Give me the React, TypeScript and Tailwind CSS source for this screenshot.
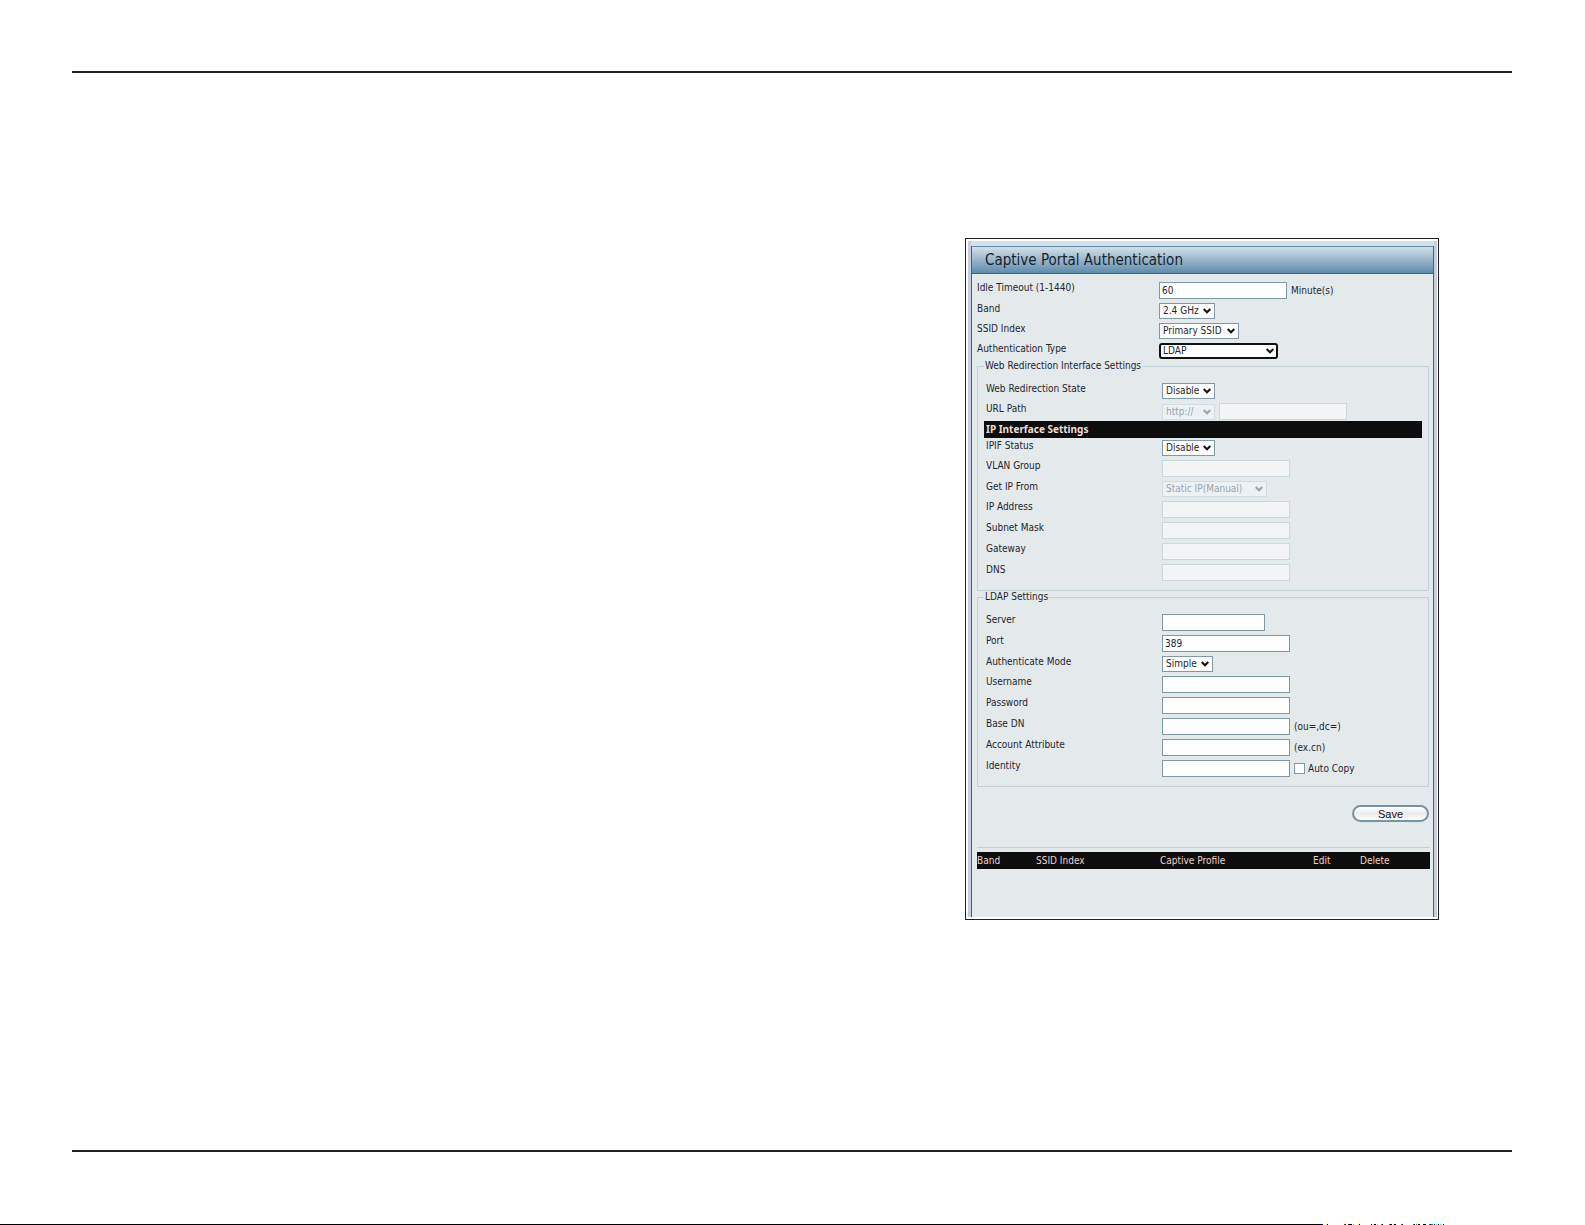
import { createContext, useContext, useId } from 'react'
import type { ReactNode } from 'react'
import clsx from 'clsx'

const FieldId = createContext('')

interface RowProps {
  label: string
  kind?: 'input' | 'select'
  nested?: boolean
  children: ReactNode
}

function Row({ label, kind = 'input', nested, children }: RowProps) {
  const id = useId()
  return (
    <div className={clsx('flex items-start', kind === 'input' ? 'h-[21px]' : 'h-5', nested && 'pl-0.5')}>
      <label htmlFor={id} className={clsx('shrink-0', nested ? 'w-[176px]' : 'w-[182px]')}>
        {label}
      </label>
      <div className="flex items-center gap-1 pt-0.5">
        <FieldId.Provider value={id}>{children}</FieldId.Provider>
      </div>
    </div>
  )
}

interface TextBoxProps {
  value?: string
  width?: string
  disabled?: boolean
  title?: string
}

function TextBox({ value = '', width = 'w-32', disabled, title }: TextBoxProps) {
  const id = useContext(FieldId)
  return (
    <input
      id={title ? undefined : id}
      aria-label={title}
      type="text"
      defaultValue={value}
      disabled={disabled}
      className={clsx(
        'h-[17px] border px-0.5',
        width,
        disabled ? 'border-[#c9d6dc] bg-[#f2f4f6]' : 'border-[#8099a6] bg-white',
      )}
    />
  )
}

interface DropDownProps {
  value: string
  width: string
  disabled?: boolean
  focused?: boolean
}

function DropDown({ value, width, disabled, focused }: DropDownProps) {
  const id = useContext(FieldId)
  return (
    <div className={clsx('relative h-4', width)}>
      <select
        id={id}
        disabled={disabled}
        className={clsx(
          'block h-4 w-full appearance-none',
          focused ? 'rounded-[3px] border-2 border-[#111] bg-white px-0.5 leading-3' : 'border px-[3px] leading-[14px]',
          !focused && (disabled ? 'border-[#cfdce2] bg-[#eef1f3] text-[#93a5b0]' : 'border-[#8099a6] bg-white'),
        )}
      >
        <option>{value}</option>
      </select>
      <svg
        viewBox="0 0 8 6"
        className={clsx('pointer-events-none absolute top-[5px] right-1 h-1.5 w-2', disabled ? 'text-[#93a5b0]' : 'text-[#111]')}
        fill="none"
        stroke="currentColor"
        strokeWidth="2"
      >
        <path d="M0.7 1 L4 4.3 L7.3 1" />
      </svg>
    </div>
  )
}

function Group({ title, children }: { title: string; children: ReactNode }) {
  return (
    <fieldset className="mr-1 border border-[#c2d1d8] px-1.5 pb-[7px]">
      <legend className="px-px leading-[10px]">{title}</legend>
      <div className="pt-2.5">{children}</div>
    </fieldset>
  )
}

const COLUMNS = [
  { name: 'Band', width: 'w-[59px]' },
  { name: 'SSID Index', width: 'w-[124px]' },
  { name: 'Captive Profile', width: 'w-[153px]' },
  { name: 'Edit', width: 'w-[47px]' },
  { name: 'Delete', width: '' },
]

// Coloured dots that end the line at the foot of the page
const DOTS: [number, string][] = [
  [0, '#00f'], [4, '#fe0'], [5, '#000'], [22, '#a20'], [23, '#00f'], [26, '#224'], [27, '#000'], [28, '#000'],
  [29, '#000'], [31, '#0cc'], [36, '#fe0'], [37, '#000'], [49, '#000'], [51, '#fe0'], [52, '#000'], [53, '#000'],
  [55, '#0ff'], [59, '#f20'], [60, '#00a'], [67, '#f20'], [68, '#000'], [69, '#000'], [71, '#fe0'], [72, '#000'],
  [73, '#000'], [79, '#f20'], [80, '#00f'], [91, '#f20'], [92, '#00a'], [94, '#0a0'], [96, '#000'], [97, '#000'],
  [101, '#000'], [102, '#000'], [103, '#00a'], [107, '#f20'], [108, '#00a'], [109, '#f20'], [110, '#0a0'],
  [112, '#00f'], [114, '#0ff'], [116, '#000'], [118, '#0ff'], [121, '#000'],
]

function CaptivePortal() {
  return (
    <section className="ml-auto mr-[73px] w-[474px] border border-[#231f20] bg-white py-0.5 pr-px pl-0.5">
      <div className="border-x-3 border-[#c6cddd] bg-[#d3e0e7] pt-[5px]">
        <div className="border-x border-[#33688c] bg-[#e4e9ec]">
          <h1 className="h-7 border-y border-t-[#5e8aa8] border-b-[#2f6a93] bg-linear-to-b from-[#d3e0e8] to-[#5f8cac] pl-[13px] text-[15px] leading-[26px] text-[#17232d]">
            Captive Portal Authentication
          </h1>
          <form className="pt-1.5 pb-12 pl-[5px]">
            <Row label="Idle Timeout (1-1440)">
              <TextBox value="60" />
              <span>Minute(s)</span>
            </Row>
            <Row label="Band" kind="select">
              <DropDown value="2.4 GHz" width="w-14" />
            </Row>
            <Row label="SSID Index" kind="select">
              <DropDown value="Primary SSID" width="w-20" />
            </Row>
            <Row label="Authentication Type" kind="select">
              <DropDown value="LDAP" width="w-[119px]" focused />
            </Row>

            <Group title="Web Redirection Interface Settings">
              <Row label="Web Redirection State" kind="select" nested>
                <DropDown value="Disable" width="w-[53px]" />
              </Row>
              <Row label="URL Path" kind="select" nested>
                <DropDown value="http://" width="w-[53px]" disabled />
                <TextBox title="URL" disabled />
              </Row>
              <h2 className="h-[17px] bg-[#0c0d0c] pl-0.5 font-['Noto_Sans',sans-serif] font-bold leading-4 text-[#f0dcd8]">
                IP Interface Settings
              </h2>
              <Row label="IPIF Status" kind="select" nested>
                <DropDown value="Disable" width="w-[53px]" />
              </Row>
              <Row label="VLAN Group" nested>
                <TextBox disabled />
              </Row>
              <Row label="Get IP From" kind="select" nested>
                <DropDown value="Static IP(Manual)" width="w-[105px]" disabled />
              </Row>
              {['IP Address', 'Subnet Mask', 'Gateway', 'DNS'].map((label) => (
                <Row key={label} label={label} nested>
                  <TextBox disabled />
                </Row>
              ))}
            </Group>

            <div className="pt-px">
              <Group title="LDAP Settings">
                <Row label="Server" nested>
                  <TextBox width="w-[103px]" />
                </Row>
                <Row label="Port" nested>
                  <TextBox value="389" />
                </Row>
                <Row label="Authenticate Mode" kind="select" nested>
                  <DropDown value="Simple" width="w-[51px]" />
                </Row>
                <Row label="Username" nested>
                  <TextBox />
                </Row>
                <Row label="Password" nested>
                  <TextBox />
                </Row>
                <Row label="Base DN" nested>
                  <TextBox />
                  <span>(ou=,dc=)</span>
                </Row>
                <Row label="Account Attribute" nested>
                  <TextBox />
                  <span>(ex.cn)</span>
                </Row>
                <Row label="Identity" nested>
                  <TextBox />
                  <label className="flex items-center gap-[3px]">
                    <input type="checkbox" className="size-[11px] appearance-none border border-[#8099a6] bg-white" />
                    Auto Copy
                  </label>
                </Row>
              </Group>
            </div>

            <div className="flex justify-end pt-[18px] pr-1">
              <button
                type="button"
                className="h-[17px] w-[77px] rounded-full border-2 border-[#7893a3] bg-linear-to-b from-white via-[#eceaec] to-white font-['Liberation_Sans',sans-serif] text-[11px] leading-3 text-[#111]"
              >
                Save
              </button>
            </div>

            <div className="mt-[25px] mr-[3px] border-t border-[#c2d1d8] pt-1">
              <table className="w-full bg-[#0c0d0c] text-left text-[#f0d2cb]">
                <thead>
                  <tr className="h-[17px]">
                    {COLUMNS.map((c) => (
                      <th key={c.name} className={clsx('p-0 font-normal', c.width)}>
                        {c.name}
                      </th>
                    ))}
                  </tr>
                </thead>
              </table>
            </div>
          </form>
        </div>
      </div>
    </section>
  )
}

export default function App() {
  return (
    <main className="bg-white pt-[71px] font-['DejaVu_Sans_Condensed','DejaVu_Sans',sans-serif] text-[10px] leading-[15px] text-[#1d262d]">
      <div className="pr-[73px] pl-[72px]">
        <hr className="border-t-2 border-[#231f20]" />
        <div className="flex pt-[165px] pb-[230px]">
          <CaptivePortal />
        </div>
        <hr className="border-t-2 border-[#231f20]" />
      </div>
      <div className="flex pt-[72px]">
        <div className="h-px flex-1 bg-black" />
        <svg viewBox="0 0 263 1" className="h-px w-[263px]" shapeRendering="crispEdges">
          {DOTS.map(([x, fill]) => (
            <rect key={x} x={x} y="0" width="1" height="1" fill={fill} />
          ))}
        </svg>
      </div>
    </main>
  )
}
